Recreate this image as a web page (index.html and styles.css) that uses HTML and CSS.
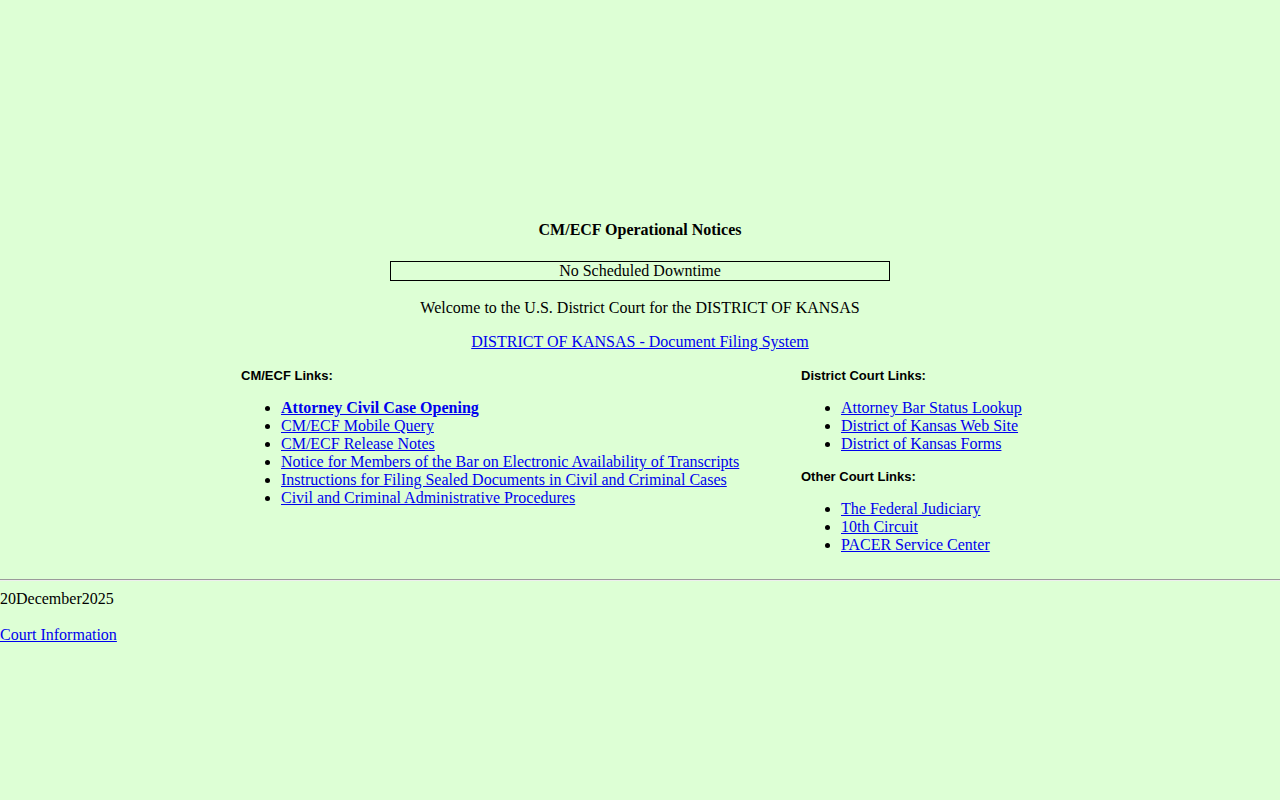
FILE: index.html
```html
<!DOCTYPE html>
<html>
<head>
<meta charset="utf-8">
<title>CM/ECF - U.S. District Court:ksd</title>
<link rel="stylesheet" href="styles.css">
</head>
<body>
<div class="top-space"></div>
<div class="notices-title">CM/ECF Operational Notices</div>
<div class="notice-box">No Scheduled Downtime</div>
<p class="welcome">Welcome to the U.S. District Court for the DISTRICT OF KANSAS</p>
<p class="main-link"><a href="#">DISTRICT OF KANSAS - Document Filing System</a></p>
<div class="links-grid">
  <div class="col">
    <div class="col-heading">CM/ECF Links:</div>
    <ul class="link-list">
      <li><a href="#" class="strong-link">Attorney Civil Case Opening</a></li>
      <li><a href="#">CM/ECF Mobile Query</a></li>
      <li><a href="#">CM/ECF Release Notes</a></li>
      <li><a href="#">Notice for Members of the Bar on Electronic Availability of Transcripts</a></li>
      <li><a href="#">Instructions for Filing Sealed Documents in Civil and Criminal Cases</a></li>
      <li><a href="#">Civil and Criminal Administrative Procedures</a></li>
    </ul>
  </div>
  <div class="col">
    <div class="col-heading">District Court Links:</div>
    <ul class="link-list">
      <li><a href="#">Attorney Bar Status Lookup</a></li>
      <li><a href="#">District of Kansas Web Site</a></li>
      <li><a href="#">District of Kansas Forms</a></li>
    </ul>
    <div class="col-heading second">Other Court Links:</div>
    <ul class="link-list">
      <li><a href="#">The Federal Judiciary</a></li>
      <li><a href="#">10th Circuit</a></li>
      <li><a href="#">PACER Service Center</a></li>
    </ul>
  </div>
</div>
<hr class="rule">
<div class="date">20December2025</div>
<p class="court-info"><a href="#">Court Information</a></p>
</body>
</html>
```
FILE: styles.css
```css
html, body {
  margin: 0;
  padding: 0;
}
body {
  background: #ddffd5;
  color: #000;
  font-family: "Liberation Serif", "Times New Roman", serif;
  font-size: 16px;
  line-height: 18px;
}
a {
  color: #0000ee;
  text-decoration: underline;
}
.top-space {
  height: 221px;
}
.notices-title {
  text-align: center;
  font-weight: bold;
  line-height: 18px;
}
.notice-box {
  width: 498px;
  margin: 22px auto 0;
  border: 1px solid #000;
  text-align: center;
  line-height: 18px;
}
.welcome {
  margin: 18px 0 0;
  text-align: center;
}
.main-link {
  margin: 16px 0 0;
  text-align: center;
}
.links-grid {
  width: 800px;
  margin: 16px auto 0;
  display: grid;
  grid-template-columns: 560px 240px;
}
.col {
  padding: 0 1px;
}
.col-heading {
  font-family: "Liberation Sans", Arial, sans-serif;
  font-weight: bold;
  font-size: 13px;
  line-height: 16px;
  padding-top: 1px;
}
.col-heading.second {
  margin-top: 15px;
}
.link-list {
  margin: 15px 0 0;
  padding-left: 40px;
  list-style: disc;
}
.link-list li {
  line-height: 18px;
}
.strong-link {
  font-weight: bold;
}
.rule {
  margin: 25px 0 0;
  border: 0;
  border-top: 1px solid #9a9a9a;
  border-bottom: 1px solid #eeeeee;
  height: 0;
}
.date {
  margin-top: 9px;
  line-height: 18px;
}
.court-info {
  margin: 18px 0 0;
}
```
